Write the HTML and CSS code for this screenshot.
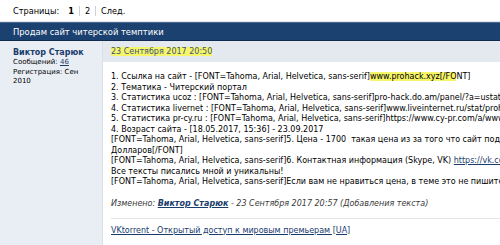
FILE: index.html
```html
<!DOCTYPE html>
<html lang="ru">
<head>
    <meta charset="UTF-8">
    <title>Продам сайт читерской темптики</title>
    <link rel="stylesheet" href="styles.css">
</head>
<body>
    <div class="pagenav">
        <span class="label">Страницы:</span>
        <span class="page current">1</span>
        <span class="page">2</span>
        <span class="page">След.</span>
    </div>
    <div class="thread-title">Продам сайт читерской темптики</div>
    <div class="post">
        <div class="userinfo">
            <a class="username" href="#">Виктор Старюк</a>
            <div class="stat">Сообщений: <a href="#">46</a></div>
            <div class="stat">Регистрация: Сен 2010</div>
        </div>
        <div class="post-main">
            <div class="post-date"><span class="mark">23 Сентября 2017 20:50</span></div>
            <div class="post-body">
                <div class="message">
                    1. Ссылка на сайт - [FONT=Tahoma, Arial, Helvetica, sans-serif]<span class="mark">www.prohack.xyz[/FO</span>NT]<br>
                    2. Тематика - Читерский портал<br>
                    3. Статистика ucoz : [FONT=Tahoma, Arial, Helvetica, sans-serif]pro-hack.do.am/panel/?a=ustat&amp;u=<br>
                    4. Статистика livernet : [FONT=Tahoma, Arial, Helvetica, sans-serif]www.liveinternet.ru/stat/prohack<br>
                    5. Статистика pr-cy.ru : [FONT=Tahoma, Arial, Helvetica, sans-serif]https://www.cy-pr.com/a/www.p<br>
                    4. Возраст сайта - [18.05.2017, 15:36] - 23.09.2017<br>
                    [FONT=Tahoma, Arial, Helvetica, sans-serif]5. Цена - 1700&nbsp; такая цена из за того что сайт подним<br>
                    Долларов[/FONT]<br>
                    [FONT=Tahoma, Arial, Helvetica, sans-serif]6. Контактная информация (Skype, VK) <a href="#">https://vk.com/</a><br>
                    Все тексты писались мной и уникальны!<br>
                    [FONT=Tahoma, Arial, Helvetica, sans-serif]Если вам не нравиться цена, в теме это не пишите![/F
                </div>
                <div class="edited">Изменено: <a href="#">Виктор Старюк</a> - 23 Сентября 2017 20:57 (Добавления текста)</div>
                <div class="signature"><a href="#">VKtorrent - Открытый доступ к мировым премьерам [UA]</a></div>
            </div>
        </div>
    </div>
</body>
</html>
```

FILE: styles.css
```css
body {
    margin: 0;
    width: 500px;
    height: 245px;
    overflow: hidden;
    display: flex;
    flex-direction: column;
    background-color: #ffffff;
    font-family: "DejaVu Sans", Tahoma, sans-serif;
    font-size: 8px;
    color: #000000;
}
a {
    color: #1a3c6c;
}
.pagenav {
    height: 21px;
    flex-shrink: 0;
    display: flex;
    align-items: center;
    padding-left: 13px;
    border-bottom: 1px solid #dfe4ea;
    white-space: nowrap;
    font-size: 8.2px;
}
.pagenav .label {
    margin-right: 4px;
}
.pagenav .page {
    padding: 0 5px;
    border-left: 1px solid #c9d1dc;
}
.pagenav .page.current {
    font-weight: bold;
    border-left: none;
}
.thread-title {
    height: 17px;
    flex-shrink: 0;
    display: flex;
    align-items: center;
    padding-left: 13px;
    background-color: #1b4170;
    border-top: 1px solid #4a6a94;
    border-bottom: 1px solid #102c52;
    color: #ffffff;
    white-space: nowrap;
    font-size: 8.4px;
}
.post {
    display: flex;
    flex: 1;
    min-height: 0;
    overflow: hidden;
}
.userinfo {
    width: 89px;
    flex-shrink: 0;
    padding: 7px 0 0 13px;
    background-color: #e9eef5;
    border-right: 1px solid #d9e0e9;
}
.username {
    display: block;
    font-weight: bold;
    font-size: 8px;
    text-decoration: none;
    margin-bottom: 1px;
}
.stat {
    font-size: 7px;
    line-height: 9.5px;
    width: 70px;
}
.post-main {
    flex: 1;
    min-width: 0;
    overflow: hidden;
}
.post-date {
    height: 21px;
    display: flex;
    align-items: center;
    padding-left: 8px;
    background-color: #e4e9f0;
    color: #3c5478;
    white-space: nowrap;
}
.mark {
    background-color: #f5f56a;
}
.post-body {
    padding: 10px 0 0 8px;
    white-space: nowrap;
}
.message {
    line-height: 10.5px;
}
.edited {
    margin-top: 11px;
    font-style: italic;
    color: #3a3a3a;
}
.edited a {
    font-weight: bold;
}
.signature {
    margin-top: 10px;
    padding-top: 7px;
    border-top: 1px solid #e2e6eb;
}
```
